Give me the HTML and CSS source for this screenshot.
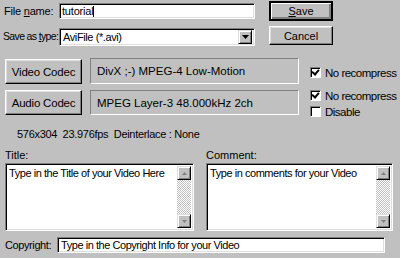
FILE: index.html
```html
<!DOCTYPE html>
<html>
<head>
  <meta charset="UTF-8">
  <title>Save Video</title>
  <link rel="stylesheet" href="styles.css">
</head>
<body>
  <div class="dialog">
    <!-- File name / Save -->
    <div class="fileRow">
      <label class="fileLabel">File <u>n</u>ame:</label>
      <div class="field fileName">tutorial<span class="caret"></span></div>
      <div class="btn btnDefault saveBtn"><u>S</u>ave</div>
    </div>
    <!-- Save as type / Cancel -->
    <div class="fileRow typeRow">
      <label class="fileLabel typeLabel">Save as <u>t</u>ype:</label>
      <div class="field combo">
        <span class="comboText">AviFile (*.avi)</span>
        <span class="comboBtn">
          <svg width="7" height="4" viewBox="0 0 7 4"><path d="M0 0h7L3.5 4z" fill="#000"/></svg>
        </span>
      </div>
      <div class="btn cancelBtn">Cancel</div>
    </div>
    <!-- Codecs -->
    <div class="codecRow videoRow">
      <div class="btn codecBtn">Video Codec</div>
      <div class="codecBox">DivX ;-) MPEG-4 Low-Motion</div>
      <div class="checks">
        <div class="check"><span class="box checked"></span>No recompress</div>
      </div>
    </div>
    <div class="codecRow audioRow">
      <div class="btn codecBtn">Audio Codec</div>
      <div class="codecBox">MPEG Layer-3 48.000kHz 2ch</div>
      <div class="checks">
        <div class="check"><span class="box checked"></span>No recompress</div>
        <div class="check"><span class="box"></span>Disable</div>
      </div>
    </div>
    <div class="info">576x304&nbsp; 23.976fps&nbsp; Deinterlace : None</div>
    <!-- Title / Comment -->
    <div class="notes">
      <div class="note titleNote">
        <label>Title:</label>
        <div class="memo">
          <div class="memoText">Type in the Title of your Video Here</div>
          <div class="scroll">
            <span class="arrow"><svg width="5" height="3" viewBox="0 0 5 3"><path d="M0 3h5L2.5 0z" fill="#808080"/></svg></span>
            <span class="track"></span>
            <span class="arrow"><svg width="5" height="3" viewBox="0 0 5 3"><path d="M0 0h5L2.5 3z" fill="#808080"/></svg></span>
          </div>
        </div>
      </div>
      <div class="note commentNote">
        <label>Comment:</label>
        <div class="memo">
          <div class="memoText">Type in comments for your Video</div>
          <div class="scroll">
            <span class="arrow"><svg width="5" height="3" viewBox="0 0 5 3"><path d="M0 3h5L2.5 0z" fill="#808080"/></svg></span>
            <span class="track"></span>
            <span class="arrow"><svg width="5" height="3" viewBox="0 0 5 3"><path d="M0 0h5L2.5 3z" fill="#808080"/></svg></span>
          </div>
        </div>
      </div>
    </div>
    <!-- Copyright -->
    <div class="copyRow">
      <label>Copyright:</label>
      <div class="field copyField">Type in the Copyright Info for your Video</div>
    </div>
  </div>
</body>
</html>
```

FILE: styles.css
```css
html, body {
  margin: 0;
  padding: 0;
  background-color: #c0c0c0;
}
body {
  font-family: "Liberation Sans", Arial, sans-serif;
  font-size: 11px;
  color: #000;
  width: 400px;
  height: 258px;
  overflow: hidden;
}
.dialog {
  display: flex;
  flex-direction: column;
  padding-top: 1px;
}
.dialog * {
  flex-shrink: 0;
  white-space: nowrap;
}
u {
  text-decoration: underline;
  text-underline-offset: 1px;
}
/* sunken edit field */
.field {
  box-sizing: border-box;
  background: #fff;
  border: 1px solid;
  border-color: #808080 #fff #fff #808080;
  box-shadow: inset 1px 1px #000, inset -1px -1px #dfdfdf;
  display: flex;
  align-items: center;
  padding-left: 3px;
  overflow: hidden;
}
/* raised push button */
.btn {
  box-sizing: border-box;
  border: 1px solid;
  border-color: #fff #000 #000 #fff;
  box-shadow: inset -1px -1px #808080, inset 1px 1px #dfdfdf;
  display: flex;
  align-items: center;
  justify-content: center;
}
.btnDefault {
  border-width: 2px;
  border-color: #000;
  box-shadow: inset 1px 1px #fff, inset -1px -1px #808080, inset -2px -2px #808080;
}
.fileRow {
  display: flex;
  align-items: flex-start;
  height: 20px;
}
.typeRow {
  margin-top: 5px;
}
.fileLabel {
  width: 59px;
  padding-left: 4px;
  box-sizing: border-box;
  line-height: 20px;
  letter-spacing: -0.2px;
}
.typeLabel {
  padding-left: 3px;
  font-size: 10.5px;
  letter-spacing: -0.65px;
  line-height: 21px;
}
.fileName {
  width: 196px;
  height: 16px;
  margin-top: 2px;
  padding-left: 2px;
  letter-spacing: -0.2px;
}
.caret {
  display: inline-block;
  width: 1px;
  height: 11px;
  background: #000;
}
.saveBtn {
  width: 64px;
  height: 20px;
  margin-left: 14px;
}
.combo {
  width: 196px;
  height: 18px;
  margin-top: 2px;
  padding-left: 3px;
  padding-right: 2px;
  justify-content: space-between;
}
.comboText {
  letter-spacing: -0.4px;
}
.comboBtn {
  box-sizing: border-box;
  width: 14px;
  height: 14px;
  background: #c0c0c0;
  border: 1px solid;
  border-color: #dfdfdf #000 #000 #dfdfdf;
  box-shadow: inset 1px 1px #fff, inset -1px -1px #808080;
  display: flex;
  align-items: center;
  justify-content: center;
}
.cancelBtn {
  width: 64px;
  height: 19px;
  margin-left: 14px;
}
/* codec rows */
.codecRow {
  display: flex;
  align-items: flex-start;
  padding-left: 5px;
}
.videoRow {
  margin-top: 12px;
}
.audioRow {
  margin-top: 6px;
}
.codecBtn {
  width: 77px;
  height: 25px;
  margin-top: 1px;
  font-size: 11.5px;
  letter-spacing: -0.2px;
}
.audioRow .codecBtn {
  margin-top: 0;
}
.codecBox {
  box-sizing: border-box;
  width: 209px;
  height: 26px;
  margin-left: 8px;
  border: 1px solid;
  border-color: #808080 #fff #fff #808080;
  display: flex;
  align-items: center;
  padding-left: 6px;
  font-size: 11.5px;
}
.audioRow .codecBox {
  height: 25px;
}
.checks {
  display: flex;
  flex-direction: column;
  gap: 5px;
  margin-left: 11px;
}
.videoRow .checks {
  margin-top: 9px;
}
.check {
  display: flex;
  align-items: center;
  height: 11px;
  gap: 4px;
  font-size: 11.5px;
  letter-spacing: -0.5px;
}
.box {
  box-sizing: border-box;
  width: 11px;
  height: 11px;
  background: #fff;
  border: 1px solid;
  border-color: #808080 #fff #fff #808080;
  box-shadow: inset 1px 1px #000;
  position: relative;
}
.box.checked::after {
  content: "";
  position: absolute;
  left: 2px;
  top: 0;
  width: 3px;
  height: 5px;
  border: solid #000;
  border-width: 0 2px 2px 0;
  transform: rotate(40deg);
}
.info {
  margin-top: 11px;
  padding-left: 17px;
  height: 13px;
  line-height: 13px;
  letter-spacing: -0.3px;
}
/* title / comment memos */
.notes {
  display: flex;
  gap: 12px;
  padding-left: 5px;
  margin-top: 8px;
}
.note {
  display: flex;
  flex-direction: column;
}
.note label {
  height: 13px;
  line-height: 13px;
  margin-bottom: 1px;
}
.titleNote .memo {
  width: 189px;
}
.commentNote .memo {
  width: 187px;
}
.memo {
  box-sizing: border-box;
  height: 68px;
  background: #fff;
  border: 1px solid;
  border-color: #808080 #fff #fff #808080;
  box-shadow: inset 1px 1px #000, inset -1px -1px #dfdfdf;
  display: flex;
  padding: 2px;
}
.memoText {
  flex: 1;
  flex-shrink: 1;
  padding: 1px 0 0 1px;
  font-size: 11px;
  letter-spacing: -0.45px;
  overflow: hidden;
}
.scroll {
  width: 14px;
  display: flex;
  flex-direction: column;
}
.arrow {
  box-sizing: border-box;
  width: 14px;
  height: 14px;
  background: #c0c0c0;
  border: 1px solid;
  border-color: #dfdfdf #000 #000 #dfdfdf;
  box-shadow: inset 1px 1px #fff, inset -1px -1px #808080;
  display: flex;
  align-items: center;
  justify-content: center;
}
.track {
  flex: 1;
  flex-shrink: 1;
  background-color: #fff;
  background-image: repeating-conic-gradient(#c0c0c0 0 25%, #fff 0 50%);
  background-size: 2px 2px;
}
.copyRow {
  display: flex;
  align-items: center;
  margin-top: 6px;
  padding-left: 5px;
}
.copyRow label {
  width: 52px;
  letter-spacing: -0.4px;
}
.copyField {
  width: 328px;
  height: 16px;
  font-size: 11px;
  letter-spacing: -0.45px;
}
```
